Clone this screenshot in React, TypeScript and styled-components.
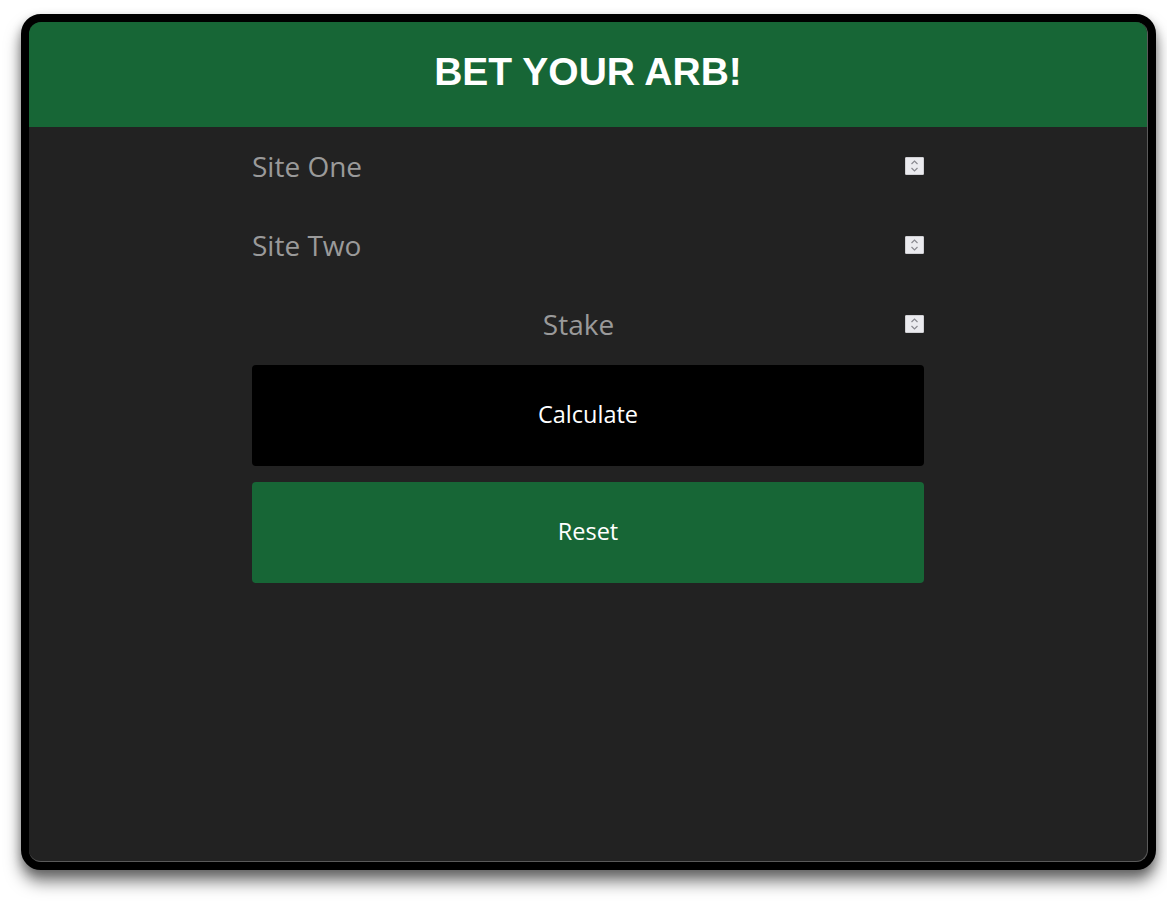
import React from "react";
import styled, { createGlobalStyle } from "styled-components";

const Global = createGlobalStyle`
  html, body { margin: 0; padding: 0; background: #ffffff; }
  body { font-family: "Open Sans", "Noto Sans", sans-serif; padding-bottom: 32px; }
  * { box-sizing: border-box; }
`;

const Frame = styled.div`
  margin: 14px 11px 0 21px;
  height: 856px;
  border: 8px solid #000;
  border-radius: 20px;
  background: #000;
  box-shadow: 0 12px 16px rgba(0, 0, 0, 0.5), 0 4px 10px rgba(0, 0, 0, 0.25);
`;

const Window = styled.div`
  height: 100%;
  border-radius: 12px;
  overflow: hidden;
  background: #222222;
  border-right: 1px solid #5a5a5a;
  border-bottom: 1px solid #5a5a5a;
  display: flex;
  flex-direction: column;
`;

const Header = styled.header`
  height: 105px;
  padding-bottom: 6px;
  background: #176636;
  display: flex;
  align-items: center;
  justify-content: center;
  flex-shrink: 0;
`;

const Title = styled.h1`
  margin: 0;
  color: #ffffff;
  font-family: "Liberation Sans", Arial, sans-serif;
  font-weight: 700;
  font-size: 39px;
`;

const Form = styled.form`
  width: 672px;
  margin: 0 auto;
  padding-top: 15px;
  display: flex;
  flex-direction: column;
`;

const Field = styled.label`
  height: 48px;
  margin-bottom: 31px;
  display: flex;
  align-items: center;
  &:last-of-type { margin-bottom: 1px; }
`;

const Input = styled.input<{ $center?: boolean }>`
  flex: 1;
  min-width: 0;
  height: 100%;
  background: transparent;
  border: none;
  outline: none;
  padding: 0;
  color: #cccccc;
  font-family: "Open Sans", "Noto Sans", sans-serif;
  font-size: 28px;
  text-align: ${(p) => (p.$center ? "center" : "left")};
  -moz-appearance: textfield;
  &::placeholder { color: #9a9a9a; }
  &::-webkit-inner-spin-button,
  &::-webkit-outer-spin-button { -webkit-appearance: none; margin: 0; }
`;

const Spinner = styled.span`
  width: 19px;
  height: 18px;
  background: #ebebef;
  border: 1px solid #d0d0d4;
  border-radius: 1px;
  display: flex;
  align-items: center;
  justify-content: center;
  flex-shrink: 0;
`;

const Button = styled.button<{ $variant: "dark" | "green" }>`
  height: 101px;
  margin-top: 16px;
  border: none;
  border-radius: 4px;
  background: ${(p) => (p.$variant === "dark" ? "#000000" : "#176636")};
  color: #ffffff;
  font-family: "Open Sans", "Noto Sans", sans-serif;
  font-size: 23.5px;
  padding-bottom: 4px;
  cursor: pointer;
`;

const SpinIcon = () => (
  <Spinner>
    <svg width="11" height="14" viewBox="0 0 11 14">
      <path d="M2.5 5 L5.5 2 L8.5 5" fill="none" stroke="#8a8a90" strokeWidth="1.2" />
      <path d="M2.5 9 L5.5 12 L8.5 9" fill="none" stroke="#8a8a90" strokeWidth="1.2" />
    </svg>
  </Spinner>
);

export default function App() {
  return (
    <>
      <Global />
      <Frame>
        <Window>
          <Header>
            <Title>BET YOUR ARB!</Title>
          </Header>
          <Form onSubmit={(e) => e.preventDefault()}>
            <Field>
              <Input type="number" placeholder="Site One" />
              <SpinIcon />
            </Field>
            <Field>
              <Input type="number" placeholder="Site Two" />
              <SpinIcon />
            </Field>
            <Field>
              <Input type="number" placeholder="Stake" $center />
              <SpinIcon />
            </Field>
            <Button type="submit" $variant="dark">Calculate</Button>
            <Button type="reset" $variant="green">Reset</Button>
          </Form>
        </Window>
      </Frame>
    </>
  );
}
